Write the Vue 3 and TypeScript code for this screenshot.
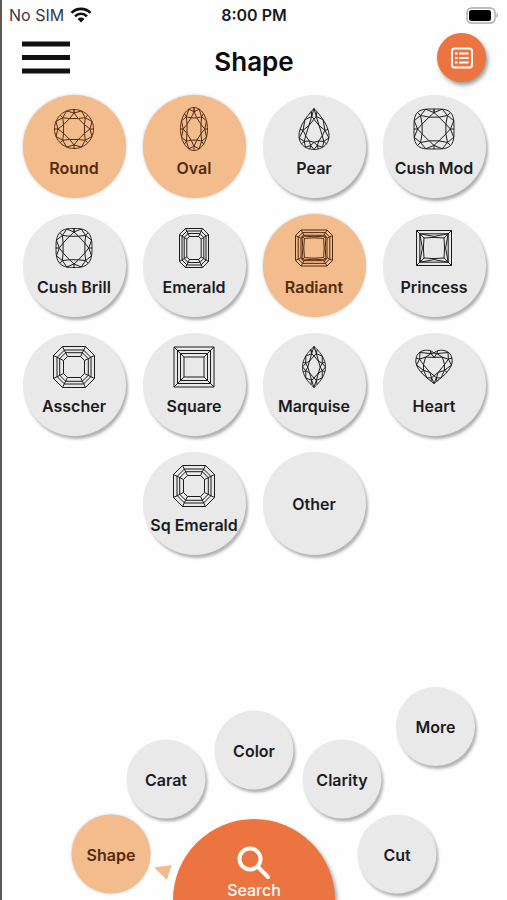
<script setup lang="ts">
import { computed, ref } from 'vue'

type Point = [number, number]
type Outline = (angle: number) => Point

interface Cut {
  name: string
  paths: string[]
}

const fmt = (p: Point): string => p.map((v) => v.toFixed(2)).join(' ')
const poly = (pts: Point[]): string => 'M' + pts.map(fmt).join('L') + 'Z'
const line = (a: Point, b: Point): string => `M${fmt(a)}L${fmt(b)}`

/* Outlines: angle 0 is the top of the stone, growing clockwise. */
const ellipse = (rx: number, ry: number): Outline => (a) => [rx * Math.sin(a), -ry * Math.cos(a)]

const cushion = (rx: number, ry: number, power: number): Outline => (a) => {
  const s = Math.sin(a)
  const c = Math.cos(a)
  const r = Math.pow(Math.pow(Math.abs(s), power) + Math.pow(Math.abs(c), power), -1 / power)
  return [rx * r * s, -ry * r * c]
}

/* Pointed stones spread their samples away from the tips. */
const marquise = (rx: number, ry: number): Outline => (angle) => {
  const a = angle + 0.22 * Math.sin(2 * angle)
  const s = Math.sin(a)
  return [rx * s * Math.abs(s), -ry * Math.cos(a)]
}

const pear = (rx: number, ry: number): Outline => (angle) => {
  const a = angle + 0.45 * Math.sin(angle)
  return [(rx / 0.77) * Math.sin(a) * Math.abs(Math.sin(a / 2)), -ry * Math.cos(a)]
}

const heartPoints: Point[] = [
  [0, -14], [7, -16.5], [14, -14.5], [18, -9], [17.5, -2], [13, 5], [7, 11], [0, 16.5],
]
const heartLeft = heartPoints
  .slice(1, 7)
  .reverse()
  .map(([x, y]): Point => [-x, y])
const heartCurve =
  'M0-14C3-17 7-17 10-16.5C16-15.5 19-10 18-4C16.5 4 7 11 0 16.5C-7 11-16.5 4-18-4C-19-10-16-15.5-10-16.5C-7-17-3-17 0-14Z'

/* Starting the ring on a shoulder keeps both halves of the heart mirrored. */
const heartRing: Point[] = [
  heartPoints[0],
  [3.5, -16],
  ...heartPoints.slice(2, 7),
  [3, 14.2],
  heartPoints[7],
  [-3, 14.2],
  ...heartLeft.slice(0, 5),
  [-3.5, -16],
]

/* Table, star and kite facets between a ring of girdle points and the centre. */
function facets(ring: Point[], cy: number, table: number, star: number): string {
  const scale = ([x, y]: Point, k: number): Point => [x * k, cy + (y - cy) * k]
  const n = ring.length
  const inner: Point[] = []
  let d = ''
  for (let i = 0; i < n; i += 2) {
    const girdle = ring[i]
    const t = scale(girdle, table)
    inner.push(t)
    for (const j of [(i + 1) % n, (i + n - 1) % n]) {
      const s = scale(ring[j], star)
      d += line(girdle, s) + line(s, t)
      if (j > i) d += line(s, ring[j])
    }
  }
  return poly(inner) + d
}

function brilliant(outline: Outline, cy = 0, table = 0.58, star = 0.8, turn = 0): string[] {
  const at = (i: number, n: number): Point => outline((i / n) * Math.PI * 2)
  const edge = Array.from({ length: 96 }, (_, i) => at(i, 96))
  const ring = Array.from({ length: 16 }, (_, i) => at(i + turn, 16))
  return [poly(edge), facets(ring, cy, table, star)]
}

function octagon(w: number, h: number, c: number): Point[] {
  return [
    [-w + c, -h], [w - c, -h], [w, -h + c], [w, h - c],
    [w - c, h], [-w + c, h], [-w, h - c], [-w, -h + c],
  ]
}

function square(w: number): Point[] {
  return [[-w, -w], [w, -w], [w, w], [-w, w]]
}

function stepped(rings: Point[][]): string[] {
  const last = rings[rings.length - 1]
  return [...rings.map(poly), rings[0].map((p, i) => line(p, last[i])).join('')]
}

/* Thin darts from each corner along the sides of a table with slightly bowed edges. */
function darts(w: number, table: number): string {
  const side: Point[][] = [
    [[-w, -w], [0, -table - 1.6], [w, -w]],
    [[-w, -w], [-table, -table], [0, -table - 0.6], [table, -table]],
  ]
  let d = ''
  for (let k = 0; k < 4; k++) {
    for (const pts of side) {
      const turned = pts.map(([x, y]): Point => {
        if (k === 0) return [x, y]
        if (k === 1) return [-y, x]
        if (k === 2) return [-x, -y]
        return [y, -x]
      })
      d += 'M' + turned.map(fmt).join('L')
    }
  }
  return d
}

const asscher = stepped([
  octagon(20.5, 20.5, 9), octagon(17, 17, 7.5), octagon(14.3, 14.3, 6), octagon(10.5, 10.5, 4),
])

const cuts: Cut[] = [
  { name: 'Round', paths: brilliant(ellipse(19.5, 19.5), 0, 0.58, 0.82, 1) },
  { name: 'Oval', paths: brilliant(ellipse(13.5, 21.5), 0, 0.56, 0.8, 1) },
  { name: 'Pear', paths: brilliant(pear(15, 20.5), 4, 0.56, 0.78) },
  { name: 'Cush Mod', paths: brilliant(cushion(20, 20, 3.6), 0, 0.6, 0.82, 1) },
  { name: 'Cush Brill', paths: brilliant(cushion(18, 19.5, 2.9), 0, 0.62, 0.82, 1) },
  {
    name: 'Emerald',
    paths: stepped([
      octagon(14.5, 19.5, 6), octagon(12, 17, 5), octagon(9.8, 14.5, 4), octagon(7.2, 11.5, 2.6),
    ]),
  },
  {
    name: 'Radiant',
    paths: [
      ...stepped([octagon(18.5, 18, 5.5), octagon(15.8, 15.4, 4.5), octagon(13, 12.7, 3)]),
      darts(12, 9.6),
    ],
  },
  {
    name: 'Princess',
    paths: [...stepped([square(17.5), square(14.2)]), darts(14.2, 10)],
  },
  { name: 'Asscher', paths: asscher },
  { name: 'Square', paths: stepped([square(20), square(16.5), square(13.5), square(10)]) },
  { name: 'Marquise', paths: brilliant(marquise(11.5, 20.5), 0, 0.54, 0.76) },
  { name: 'Heart', paths: [heartCurve, facets(heartRing, -3, 0.6, 0.8)] },
  { name: 'Sq Emerald', paths: asscher },
  { name: 'Other', paths: [] },
]

const picked = ref<string[]>(['Round', 'Oval', 'Radiant'])

function toggle(name: string): void {
  picked.value = picked.value.includes(name)
    ? picked.value.filter((n) => n !== name)
    : [...picked.value, name]
}

/* Filter steps sit on an arc around the search button. */
const arcRadius = 150
const steps = ['Shape', 'Carat', 'Color', 'Clarity', 'Cut'].map((name, i) => {
  const angle = 18 + i * 36
  const rad = (angle * Math.PI) / 180
  return {
    name,
    angle,
    style: {
      left: `calc(50% - ${Math.round(arcRadius * Math.cos(rad))}px)`,
      bottom: `${Math.round(arcRadius * Math.sin(rad))}px`,
    },
  }
})

const active = ref('Shape')
const activeStep = computed(() => steps.find((s) => s.name === active.value))
</script>

<template>
  <div class="screen">
    <div class="status">
      <span class="carrier">
        No SIM
        <svg class="wifi" viewBox="0 0 22 16" aria-hidden="true">
          <path d="M1.5 5.8a13.4 13.4 0 0 1 19 0" />
          <path d="M5 9.3a8.5 8.5 0 0 1 12 0" />
          <path class="dot" d="M7.6 12a4.8 4.8 0 0 1 6.8 0L11 15.6Z" />
        </svg>
      </span>
      <span class="clock">8:00 PM</span>
      <svg class="battery" viewBox="0 0 33 17" aria-hidden="true">
        <rect class="shell" x="1" y="1" width="28" height="15" rx="4.5" />
        <rect x="3" y="3" width="22" height="11" rx="2.5" />
        <path class="tip" d="M30.5 6v5c2-.6 2-4.4 0-5Z" />
      </svg>
    </div>

    <header class="header">
      <button class="menu" type="button" aria-label="Menu">
        <svg viewBox="0 0 48 33" aria-hidden="true">
          <path d="M0 3h48M0 16.5h48M0 30h48" />
        </svg>
      </button>
      <h1 class="title">{{ active }}</h1>
      <button class="list" type="button" aria-label="Results list">
        <svg viewBox="0 0 24 24" aria-hidden="true">
          <rect x="2" y="2.5" width="20" height="19" rx="2.5" />
          <path d="M9 7.5h9.5M9 12h9.5M9 16.5h9.5M5 7.5h2.5M5 12h2.5M5 16.5h2.5" />
        </svg>
      </button>
    </header>

    <main class="cuts">
      <button
        v-for="cut in cuts"
        :key="cut.name"
        type="button"
        class="disc cut"
        :class="{ selected: picked.includes(cut.name), plain: !cut.paths.length }"
        :aria-pressed="picked.includes(cut.name)"
        @click="toggle(cut.name)"
      >
        <svg v-if="cut.paths.length" class="stone" viewBox="-22 -22 44 44" aria-hidden="true">
          <path v-for="(d, i) in cut.paths" :key="i" :d="d" />
        </svg>
        <span>{{ cut.name }}</span>
      </button>
    </main>

    <nav class="dial" aria-label="Filters">
      <button
        type="button"
        class="disc step"
        :class="{ selected: active === 'More' }"
        @click="active = 'More'"
      >
        More
      </button>
      <button
        v-for="step in steps"
        :key="step.name"
        type="button"
        class="disc step on-arc"
        :class="{ selected: active === step.name }"
        :style="step.style"
        @click="active = step.name"
      >
        {{ step.name }}
      </button>
      <svg v-if="activeStep" class="pointer" viewBox="-110 -110 220 110" aria-hidden="true">
        <path d="M-105 0L-89-8V8Z" :transform="`rotate(${activeStep.angle})`" />
      </svg>
      <button type="button" class="search">
        <svg viewBox="0 0 34 34" aria-hidden="true">
          <circle cx="13" cy="13" r="10.5" />
          <path d="M21 21L31 31" />
        </svg>
        Search
      </button>
    </nav>
  </div>
</template>

<style>
body {
  margin: 0;
  background: #fefefe;
}
</style>

<style scoped>
.screen {
  box-sizing: border-box;
  min-height: 100vh;
  display: flex;
  flex-direction: column;
  padding-left: 1px;
  background: #fefefe;
  box-shadow: inset 2px 0 #58585a;
  color: #1c1c1e;
  font-family: Inter, 'Liberation Sans', sans-serif;
}

button {
  margin: 0;
  padding: 0;
  border: 0;
  background: none;
  color: inherit;
  font: inherit;
  cursor: pointer;
}

svg {
  display: block;
}

.status {
  display: grid;
  grid-template-columns: 1fr auto 1fr;
  align-items: center;
  height: 30px;
  padding: 0 8px;
  font-size: 16px;
}

.carrier {
  display: flex;
  align-items: center;
  gap: 6px;
  color: #3a3a3c;
}

.wifi {
  width: 22px;
  height: 16px;
  fill: none;
  stroke: #111;
  stroke-width: 2.6;
}

.wifi .dot {
  fill: #111;
  stroke: none;
}

.clock {
  font-weight: 600;
}

.battery {
  justify-self: end;
  width: 33px;
  height: 17px;
  fill: #000;
}

.battery .shell {
  fill: none;
  stroke: #a9a9a9;
  stroke-width: 1.4;
}

.battery .tip {
  fill: #a9a9a9;
}

.header {
  display: grid;
  grid-template-columns: 1fr auto 1fr;
  align-items: center;
  padding: 3px 21px 0;
}

.menu {
  width: 48px;
}

.menu svg {
  width: 48px;
  height: 33px;
  stroke: #111;
  stroke-width: 5;
}

.title {
  margin: 0;
  padding-top: 8px;
  color: #0a0a0a;
  font-size: 26px;
  font-weight: 600;
  line-height: 32px;
}

.list {
  justify-self: end;
  display: grid;
  place-items: center;
  width: 49px;
  height: 49px;
  border-radius: 50%;
  background: #ec7440;
  box-shadow: 2px 3px 4px rgba(0, 0, 0, 0.4);
}

.list svg {
  width: 24px;
  height: 24px;
  fill: none;
  stroke: #fff;
  stroke-width: 2;
}

.cuts {
  display: flex;
  flex-wrap: wrap;
  justify-content: center;
  gap: 16px 17px;
  padding: 13px 20px 24px;
}

.disc {
  border-radius: 50%;
  background: #e9e9e9;
  box-shadow: 2px 3px 3px rgba(0, 0, 0, 0.3);
  font-size: 16px;
  font-weight: 600;
  line-height: 20px;
  white-space: nowrap;
}

.disc.selected {
  background: #f3bc8c;
  box-shadow: 0 0 3px rgba(0, 0, 0, 0.22);
  color: #542b10;
}

.cut {
  display: flex;
  flex-direction: column;
  align-items: center;
  gap: 7px;
  width: 103px;
  height: 103px;
  padding-top: 12px;
}

.cut.plain {
  justify-content: center;
  padding-top: 0;
}

.stone {
  flex: none;
  width: 44px;
  height: 44px;
  fill: none;
  stroke: currentColor;
  stroke-width: 1;
  stroke-linejoin: round;
}

.dial {
  position: relative;
  display: flex;
  justify-content: flex-end;
  align-items: flex-start;
  height: 213px;
  margin-top: auto;
  padding-right: 32px;
  overflow: hidden;
}

.step {
  width: 79px;
  height: 79px;
}

.on-arc {
  position: absolute;
  transform: translate(-50%, 50%);
}

.pointer {
  position: absolute;
  bottom: 0;
  left: 50%;
  width: 220px;
  height: 110px;
  fill: #f3bc8c;
  transform: translateX(-50%);
  pointer-events: none;
}

.search {
  position: absolute;
  bottom: 0;
  left: 50%;
  display: flex;
  flex-direction: column;
  align-items: center;
  justify-content: flex-end;
  width: 162px;
  height: 81px;
  border-radius: 81px 81px 0 0;
  background: #ec7440;
  box-shadow: 2px 3px 4px rgba(0, 0, 0, 0.4);
  color: #fff;
  font-size: 16px;
  font-weight: 500;
  line-height: 20px;
  transform: translateX(-50%);
}

.search svg {
  width: 34px;
  height: 34px;
  fill: none;
  stroke: #fff;
  stroke-width: 4;
  stroke-linecap: round;
}
</style>
